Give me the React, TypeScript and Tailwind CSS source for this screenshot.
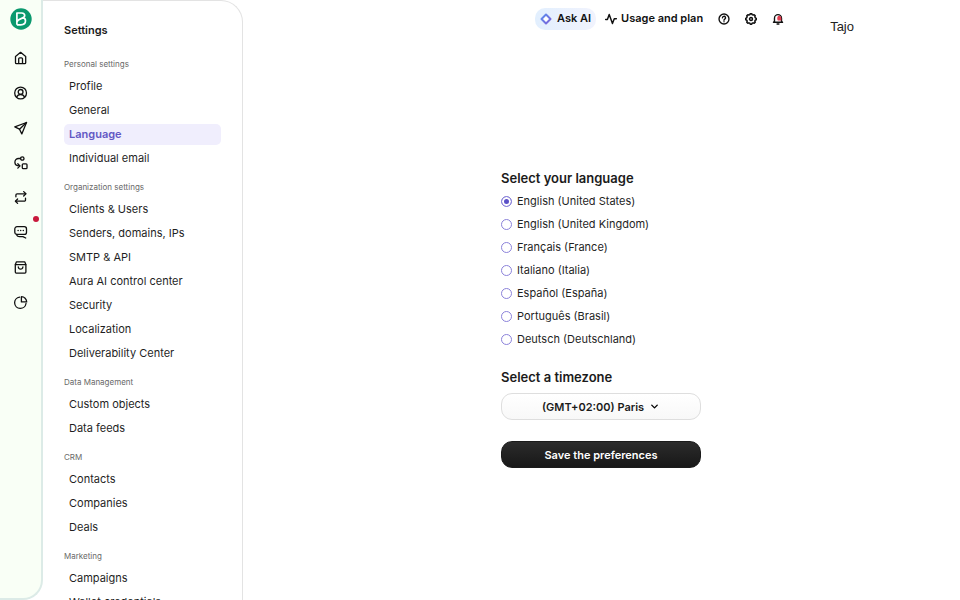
import React, { useState } from 'react';
import { ChevronDown } from 'lucide-react';

interface NavSection {
  title: string;
  items: string[];
}

const sections: NavSection[] = [
  { title: 'Personal settings', items: ['Profile', 'General', 'Language', 'Individual email'] },
  {
    title: 'Organization settings',
    items: [
      'Clients & Users',
      'Senders, domains, IPs',
      'SMTP & API',
      'Aura AI control center',
      'Security',
      'Localization',
      'Deliverability Center'
    ]
  },
  { title: 'Data Management', items: ['Custom objects', 'Data feeds'] },
  { title: 'CRM', items: ['Contacts', 'Companies', 'Deals'] },
  { title: 'Marketing', items: ['Campaigns', 'Wallet credentials'] }
];

const languages = [
  'English (United States)',
  'English (United Kingdom)',
  'Français (France)',
  'Italiano (Italia)',
  'Español (España)',
  'Português (Brasil)',
  'Deutsch (Deutschland)'
];

function Icon({ children, className = 'size-[14px]' }: { children: React.ReactNode; className?: string }) {
  return (
    <svg
      viewBox="0 0 14 14"
      className={className}
      fill="none"
      stroke="currentColor"
      strokeWidth="1.3"
      strokeLinecap="round"
      strokeLinejoin="round"
      aria-hidden="true"
    >
      {children}
    </svg>
  );
}

const railItems = [
  {
    label: 'Home',
    icon: (
      <Icon>
        <path d="M1.5 5.4 6.6 1.3l5.1 4.1v6.3a.9.9 0 0 1-.9.9H2.4a.9.9 0 0 1-.9-.9z" />
        <path d="M4.7 12.4V7.8a1 1 0 0 1 1-1h1.8a1 1 0 0 1 1 1v4.6" />
      </Icon>
    )
  },
  {
    label: 'Contacts',
    icon: (
      <Icon>
        <circle cx="6.6" cy="7" r="5.9" />
        <circle cx="6.6" cy="5.9" r="2.4" />
        <path d="M2.7 11.1c.7-1.7 2-2.6 3.9-2.6s3.2.9 3.9 2.6" />
      </Icon>
    )
  },
  {
    label: 'Campaigns',
    icon: (
      <Icon>
        <path d="M12.5 1.5.8 5.8l4.7 2.4 2.3 4.7z" />
        <path d="M12.5 1.5 5.5 8.2" />
      </Icon>
    )
  },
  {
    label: 'Automations',
    icon: (
      <Icon>
        <circle cx="8.3" cy="2.5" r="1.7" />
        <path d="M6.5 2.5H4.6A3.7 3.7 0 0 0 .9 6.2c0 2.4 1.5 3.7 4.7 3.7" />
        <path d="M3.8 7.7 6 9.9l-2.2 2.2" />
        <rect x="8.3" y="7.9" width="4.7" height="4.7" rx=".9" />
      </Icon>
    )
  },
  {
    label: 'Transactional',
    icon: (
      <Icon>
        <path d="M1.9 5.8V4a1.2 1.2 0 0 1 1.2-1.2h8.5" />
        <path d="M9.7.6 11.900 2.8 9.7 5" />
        <path d="M11.5 7.2V9a1.2 1.2 0 0 1-1.2 1.2H1.7" />
        <path d="M3.6 8 1.4 10.200l2.200 2.200" />
      </Icon>
    )
  },
  {
    label: 'Conversations',
    alert: true,
    icon: (
      <Icon>
        <path d="M3 .7h7.300a2.200 2.200 0 0 1 2.200 2.200v3.300a2.200 2.200 0 0 1-2.200 2.200H3A2.200 2.200 0 0 1 .8 6.200V2.900A2.200 2.200 0 0 1 3 .7z" />
        <path d="M4.1 4.5h.01M6.7 4.5h.01M9.3 4.5h.01" strokeWidth="1.5" />
        <path d="M2.7 8.500c.2 1.500 1.100 2.100 2.700 2.100h3.500l2.800 1.400" />
      </Icon>
    )
  },
  {
    label: 'Commerce',
    icon: (
      <Icon>
        <path d="M2.5.8h8.200l1.200 2.600v7.700a1 1 0 0 1-1 1H2.300a1 1 0 0 1-1-1V3.400z" />
        <path d="M1.4 3.600h10.400M4.300 6c.2 1.500 1 2.200 2.300 2.200s2.100-.7 2.300-2.200" />
      </Icon>
    )
  },
  {
    label: 'Analytics',
    icon: (
      <Icon>
        <path d="M5.600 1.100A5.700 5.700 0 1 0 12 7.500" />
        <path d="M7.400.7v5.200h5.300A5.300 5.300 0 0 0 7.400.7z" />
      </Icon>
    )
  }
];

function Rail() {
  return (
    <nav
      aria-label="Main"
      className="flex w-[43px] shrink-0 flex-col items-center rounded-br-[20px] border-r-2 border-b-2 border-[#dcebe7] bg-[#f9fff6] pt-2"
    >
      <a href="#" aria-label="Dashboard" className="mb-[21px]">
        <svg viewBox="0 0 22 22" className="size-[22px]" fill="none" aria-hidden="true">
          <circle cx="11" cy="11" r="10.7" fill="#0b996e" />
          <path
            d="M6.900 16.800V5h4.800c1.800 0 3 1.100 3 2.700 0 3.200-7.600 2.700-7.600 6.300M12.600 9.700c1.700.3 2.900 1.400 2.900 3.100 0 2.400-2 4-4.700 4H6.900"
            stroke="#fff"
            strokeWidth="1.7"
            strokeLinejoin="round"
          />
        </svg>
      </a>
      <ul className="flex flex-col gap-[21px]">
        {railItems.map((item) => (
          <li key={item.label} className="relative h-[14px]">
            <a href="#" aria-label={item.label} className="block text-[#111]">
              {item.icon}
            </a>
            {item.alert && (
              <span className="absolute -top-[10px] left-[19px] size-[6px] rounded-full bg-[#c8193c]" />
            )}
          </li>
        ))}
      </ul>
    </nav>
  );
}

function SettingsMenu() {
  return (
    <aside className="w-[200px] shrink-0 overflow-hidden rounded-tr-[22px] border-t border-r border-[#e3e3e3] pt-5 pr-[21px] pl-[21px]">
      <h1 className="mb-[19px] text-[11px] leading-[18px] font-semibold text-[#1b1b1b]">Settings</h1>
      {sections.map((section) => (
        <section key={section.title} className="mb-3">
          <h2 className="mb-[6px] text-[8px] leading-[12px] text-[#696969]">{section.title}</h2>
          <ul className="flex flex-col gap-[3px]">
            {section.items.map((item) => (
              <li key={item}>
                <a
                  href="#"
                  className={`block rounded-[5px] px-[5px] text-[11px] leading-[21px] ${
                    item === 'Language' ? 'bg-[#f0eefd] font-semibold text-[#6358c4]' : 'text-[#1f1f1f]'
                  }`}
                >
                  {item}
                </a>
              </li>
            ))}
          </ul>
        </section>
      ))}
    </aside>
  );
}

function Header() {
  return (
    <header className="flex h-[37px] items-center justify-end pr-[106px] text-[11px] font-semibold text-[#111]">
      <button className="flex h-[22px] items-center gap-[5px] rounded-[10px] bg-linear-to-r from-[#e2effe] to-[#f1f3fd] px-[5px]">
        <svg viewBox="0 0 12 12" className="size-3" fill="none" aria-hidden="true">
          <defs>
            <linearGradient id="spark" x1="0" y1="0" x2="1" y2="1">
              <stop offset="0" stopColor="#5b8def" />
              <stop offset="1" stopColor="#7d63d8" />
            </linearGradient>
          </defs>
          <path d="M6 1.5 10.5 6 6 10.5 1.5 6z" fill="#fff" stroke="url(#spark)" strokeWidth="2" strokeLinejoin="round" />
        </svg>
        Ask AI
      </button>
      <button className="ml-[9px] flex items-center gap-1">
        <Icon className="size-3">
          <path d="M.8 7.5h2l2.1-5.7 3.8 10.4 2.1-5.6h2.4" strokeWidth="1.7" />
        </Icon>
        Usage and plan
      </button>
      <button aria-label="Help" className="ml-[15px]">
        <Icon className="size-3">
          <circle cx="7" cy="7" r="5.8" strokeWidth="1.6" />
          <path d="M5.2 5.7a1.8 1.8 0 1 1 2.7 1.5c-.6.4-.9.6-.9 1.2M7 10.2h.01" strokeWidth="1.6" />
        </Icon>
      </button>
      <button aria-label="Settings" className="ml-[15px]">
        <Icon className="size-3">
          <path
            d="m5.7 1.9.5-1.1h1.6l.5 1.1 1.2.5 1.2-.4 1.2 1.2-.4 1.2.5 1.2 1.1.6v1.6l-1.1.5-.5 1.2.4 1.2-1.2 1.2-1.2-.4-1.2.5-.5 1.1H6.2l-.5-1.1-1.200-.5-1.200.4-1.200-1.200.4-1.200L2 8.300.9 7.800V6.200L2 5.600l.5-1.200-.4-1.200L3.300 2l1.200.4z"
            strokeWidth="1.8"
          />
          <circle cx="7" cy="7" r="1.7" strokeWidth="1.8" />
        </Icon>
      </button>
      <button aria-label="Notifications" className="ml-[15px]">
        <Icon className="size-3">
          <path d="M2.9 9.8V6a4.1 4.1 0 0 1 8.2 0v3.8l1.2 1H1.7z" strokeWidth="1.6" />
          <path d="M5.9 12.8h2.2" strokeWidth="1.6" />
          <path d="M7.4 3.2a2.8 2.8 0 0 1 3.5 2.7v2.9H6.8c-1.2-2-.8-4.5.6-5.600z" fill="#e23d50" stroke="none" />
        </Icon>
      </button>
      <span className="ml-[46px] pt-4 font-['Liberation_Sans',sans-serif] text-[13px] font-normal text-[#222]">Tajo</span>
    </header>
  );
}

function LanguageForm() {
  const [language, setLanguage] = useState(languages[0]);

  return (
    <form className="flex w-[200px] flex-col" onSubmit={(e) => e.preventDefault()}>
      <fieldset>
        <legend className="text-[13px] leading-[18px] font-semibold text-[#1b1b1b]">Select your language</legend>
        <div className="mt-[3px] flex flex-col">
          {languages.map((name) => (
            <label key={name} className="flex h-[23px] items-center gap-[5px] text-[11px] text-[#1f1f1f]">
              <input
                type="radio"
                name="language"
                checked={language === name}
                onChange={() => setLanguage(name)}
                className="size-[11px] appearance-none rounded-full border border-[#8b82da] bg-white checked:border-[#8b82da] checked:bg-[#5b50c8] checked:shadow-[inset_0_0_0_2px_#fff]"
              />
              {name}
            </label>
          ))}
        </div>
      </fieldset>
      <label htmlFor="timezone" className="mt-[17px] text-[13px] leading-[18px] font-semibold text-[#1b1b1b]">
        Select a timezone
      </label>
      <div className="relative mt-[7px]">
        <select
          id="timezone"
          className="h-[27px] w-full appearance-none rounded-[11px] border border-[#dedede] bg-linear-to-b from-white to-[#f8f8f8] pr-4 text-center text-[11px] font-semibold text-[#1b1b1b] [text-align-last:center]"
        >
          <option>(GMT+02:00) Paris</option>
        </select>
        <ChevronDown className="pointer-events-none absolute top-2 right-[41px] size-[11px]" strokeWidth={3} />
      </div>
      <button
        type="submit"
        className="mt-[21px] h-[27px] rounded-[11px] border border-[#1b1b1b] bg-linear-to-b from-[#2c2c2c] to-[#181818] text-[11px] font-semibold text-white"
      >
        Save the preferences
      </button>
    </form>
  );
}

export default function App() {
  return (
    <div className="flex h-screen overflow-hidden bg-white font-[Inter,sans-serif]">
      <Rail />
      <SettingsMenu />
      <div className="flex min-w-0 flex-1 flex-col">
        <Header />
        <main className="flex flex-1 items-center justify-center pr-px">
          <LanguageForm />
        </main>
      </div>
    </div>
  );
}
